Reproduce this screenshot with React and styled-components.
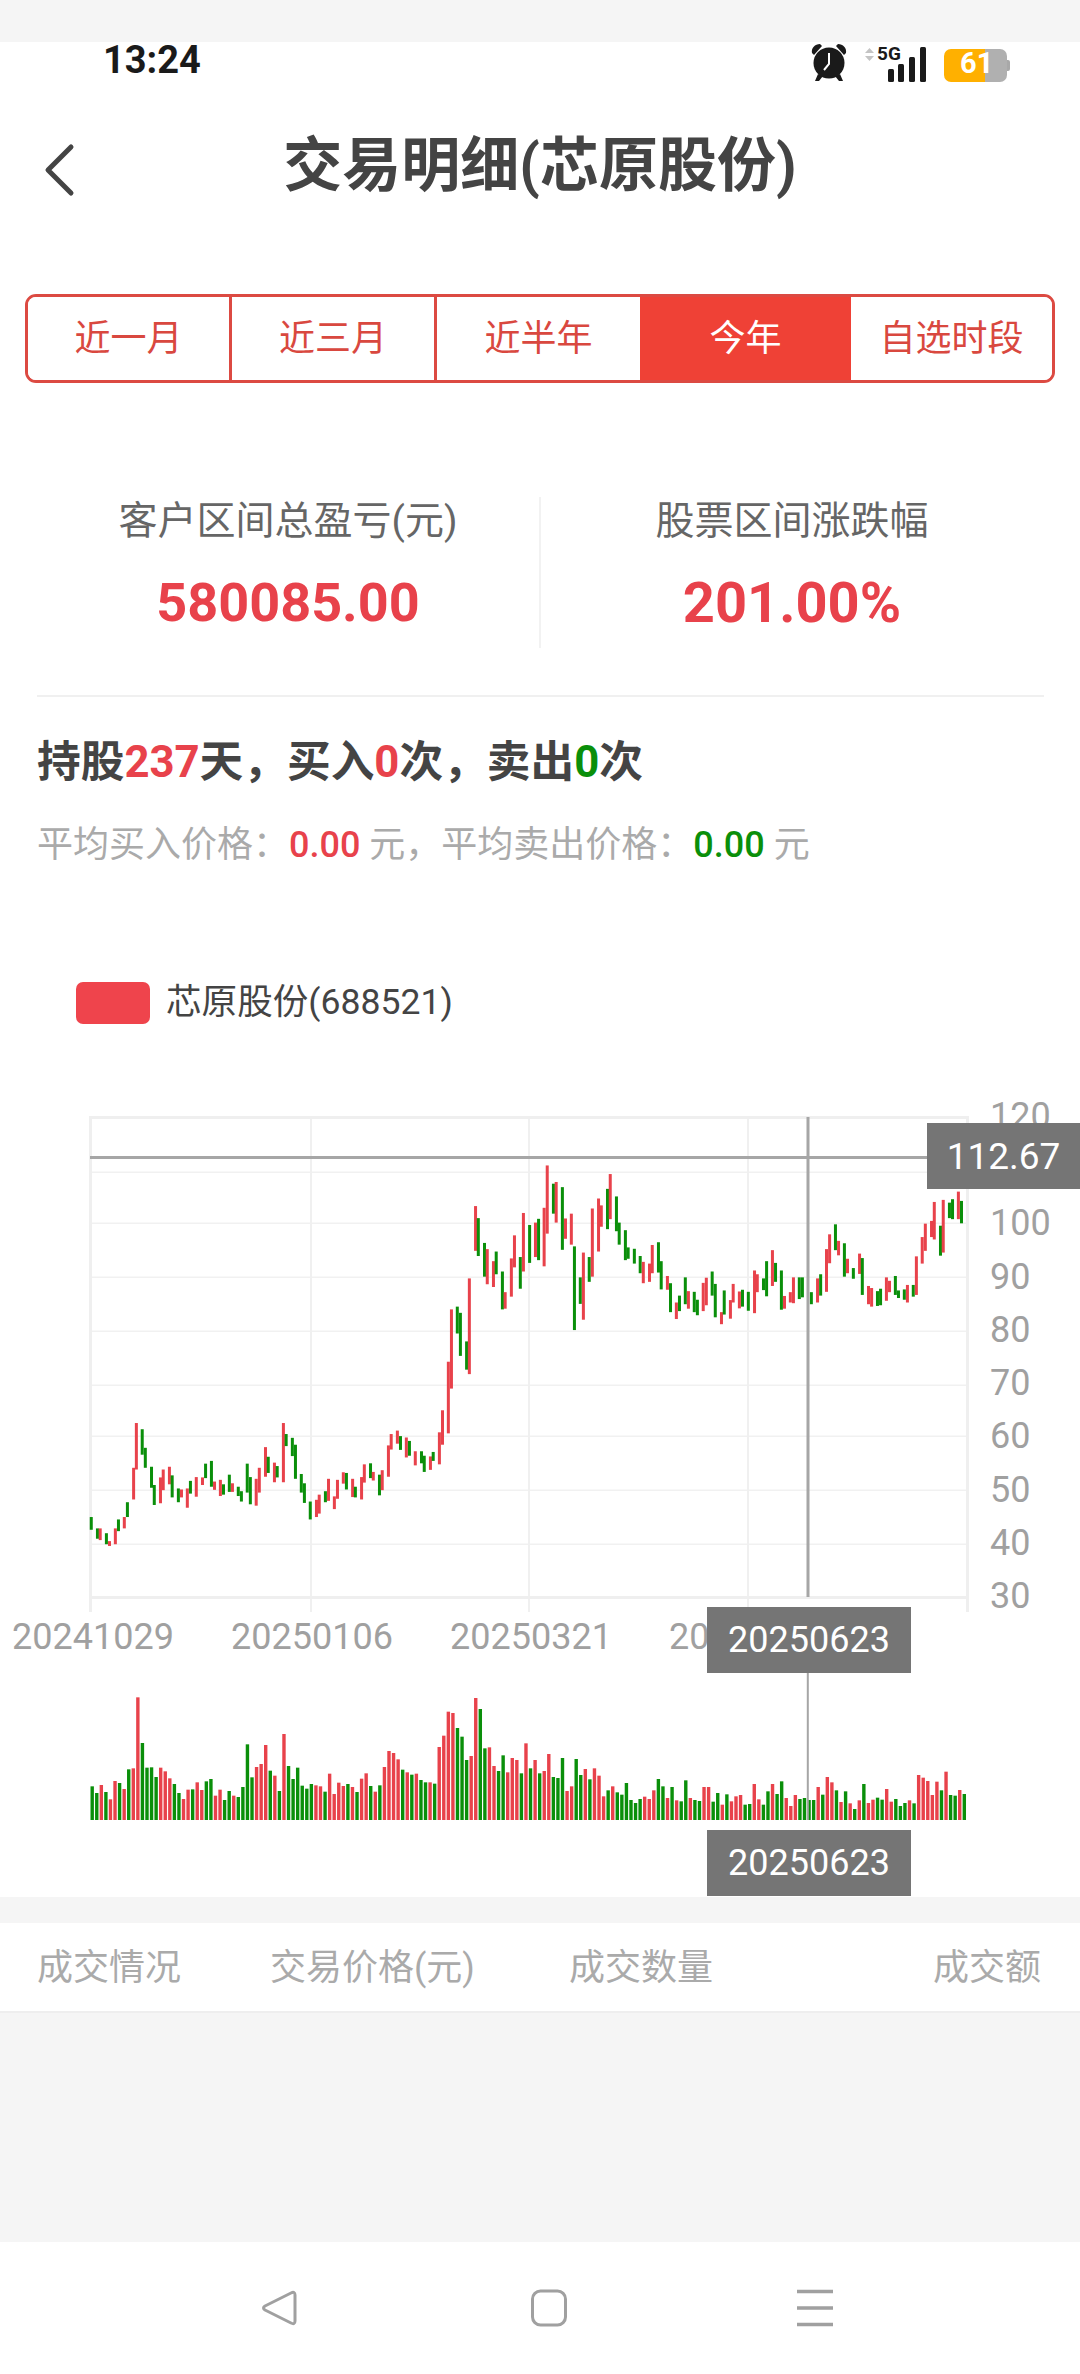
import React from 'react'
import styled, { createGlobalStyle } from 'styled-components'

const RED = '#e8424b'
const GREEN = '#0a8f0a'

// candles, read off the chart: [up?, x, top, bottom]
const candlesA = 'g265,1243,1280 g283,1276,1306 r291,1276,1310 g309,1290,1322 r318,1313,1327 r335,1276,1322 g344,1250,1284 r361,1243,1276 g370,1200,1243 r388,1100,1192 r396,970,1105 g413,988,1062 g422,1042,1100 g440,1097,1158 g448,1150,1208 r466,1128,1203 r474,1105,1165 r492,1097,1148 g500,1122,1186 g518,1160,1200 r527,1163,1186 r544,1160,1216 g553,1138,1175 r570,1127,1184 r588,1128,1150 g597,1088,1130 g614,1080,1155 r623,1140,1164 r640,1135,1182 g649,1148,1178 g666,1120,1170 r675,1145,1170 g692,1155,1182 g701,1168,1198 g718,1088,1172 g727,1127,1206 r744,1132,1210 r753,1100,1172 r771,1040,1126 g779,1068,1115 r797,1085,1142 g805,1095,1128 r823,970,1142 g831,1002,1037 g849,1013,1066 g858,1033,1132 g875,1118,1172 g884,1145,1202 g901,1198,1250 r919,1193,1243 r927,1178,1233 g945,1168,1200 r954,1132,1196 r971,1183,1220 r980,1135,1190 r997,1113,1146 g1006,1115,1163 r1024,1132,1185 g1032,1155,1186 r1050,1127,1192 r1058,1090,1143 g1076,1087,1130 r1084,1112,1137 g1102,1120,1180 r1110,1107,1165 r1128,1035,1126 r1136,1002,1047 r1154,992,1030 g1163,1008,1048 r1180,1012,1070 g1189,1022,1065 r1206,1052,1093 g1224,1052,1087 g1232,1065,1112 r1250,1067,1106 g1258,1054,1080 r1276,997,1090 r1285,933,1033 r1302,792,1000 r1311,640,870 g1328,632,710 g1337,650,775 g1355,733,815 r1363,550,828 r1381,340,470 g1389,375,485 g1407,447,545 r1415,465,567 r1433,500,575 g1441,472,538 g1459,530,640 r1467,590,638 r1485,492,603 r1494,425,518 g1511,488,580 r1520,360,530 g1538,395,505 r1555,388,488 g1564,377,497'
const candlesB = 'r12,345,515 r21,222,420 g39,275,362 r47,270,388 g65,285,467 r74,376,435 r91,362,452 g100,457,700 g117,547,624 r126,475,670 g143,488,560 r152,347,545 r170,318,472 r178,338,400 g196,290,407 r204,247,378 g222,312,413 g230,388,452 g248,410,497 g256,460,493 g274,464,507 g291,485,535 r300,502,564 r318,507,560 r326,453,535 g344,445,533 g352,500,582 r370,543,583 g379,564,648 r396,620,668 g405,600,645 g422,547,625 r431,587,638 g448,589,648 g457,612,657 r474,563,645 r483,548,628 g500,530,600 g509,566,663 r527,648,683 g535,585,655 r553,613,667 r561,566,620 r579,588,637 g588,583,632 g605,589,644 r623,527,651 r631,538,590 g649,550,584 g658,500,602 r675,468,572 g684,505,560 g701,527,641 r710,601,638 r727,590,620 r736,547,622 g753,547,610 g762,547,605 g788,590,625 r806,550,620 g815,538,600 r832,465,589 r841,422,506 g858,393,468 r867,441,483 g884,448,545 r893,493,535 g910,520,551 r928,478,537 g936,491,598 r954,572,625 r963,578,632 g980,587,630 g989,580,628 r1006,547,615 r1015,557,590 g1032,543,598 g1041,585,607 g1058,582,612 r1067,569,620 g1084,569,603 r1093,486,598 r1110,430,507 r1119,391,470 r1137,383,430 r1145,328,437 g1163,397,484 r1171,322,475 g1189,330,375 g1198,320,378 r1215,298,378 g1224,325,390'

const volumes = 'g472 g492 r468 g489 r511 r456 g462 r480 g421 r418 r205 g342 g416 g415 g444 r416 r427 r448 g465 g492 r510 r482 g481 r460 r483 g457 g450 r500 r482 g513 g486 r500 g504 g474 g346 g445 r414 r405 r348 g425 r440 g486 r315 g411 g450 g416 g470 g479 g465 r469 r472 g488 r434 r495 r461 r471 g465 r474 g489 r449 r433 g471 r488 g469 r414 r366 r372 r391 g422 r430 g437 r434 g453 g460 r460 g464 r354 r320 r248 r252 g297 g323 g393 r381 r207 g240 g358 r355 r411 g426 g379 r430 r387 r393 g433 r343 g418 r393 g433 r426 r375 g444 g447 g387 r486 r472 g390 g438 r420 g451 r418 r440 r502 g484 r472 g490 g497 g462 g513 g522 g510 r503 r510 r484 g450 g472 r507 g474 r514 g517 g454 r507 g513 g516 r474 r474 g518 g492 r527 g496 r517 r502 r498 g527 g525 r465 r511 g527 g487 r465 g495 g457 r507 r531 r498 g510 g507 g513 g513 r474 g497 r444 r460 g484 r519 g487 r523 g540 r514 g465 r522 r512 g506 g512 r480 r518 g510 g531 g522 r514 g523 r438 r446 r456 r498 r458 g484 r428 g498 g500 r483 g495'

const parseCandles = (s, offset) => s.split(' ').map(item => {
  const [x, top, bottom] = item.slice(1).split(',').map(Number)
  return {
    color: item[0] === 'r' ? RED : GREEN,
    x: offset + x / 2.904,
    top: 1090 + top / 2.904,
    bottom: 1090 + bottom / 2.904,
  }
})

const candles = [...parseCandles(candlesA, 0), ...parseCandles(candlesB, 540)]

const gridRows = [1173, 1224, 1278, 1332, 1386, 1437, 1491, 1545]
const gridCols = [311, 529, 748]
const priceLabels = [[120, 1129], [100, 1236], [90, 1290], [80, 1343], [70, 1396], [60, 1449], [50, 1503], [40, 1556], [30, 1609]]
const dateLabels = [['20241029', 12], ['20250106', 231], ['20250321', 450], ['20', 669]]
const tabs = ['近一月', '近三月', '近半年', '今年', '自选时段']

const Global = createGlobalStyle`
  html, body { margin: 0; padding: 0; background: #f5f5f5; }
  body { font-family: Roboto, "Noto Sans CJK SC", sans-serif; }
`

const Page = styled.div`
  width: 1080px;
  height: 2374px;
  display: flex;
  flex-direction: column;
  background: #f5f5f5;
  overflow: hidden;
`

const TopGap = styled.div`
  height: 42px;
  flex: none;
`

const Main = styled.div`
  background: #fff;
  flex: none;
`

const StatusBar = styled.div`
  height: 46px;
  display: flex;
  align-items: center;
  justify-content: space-between;
  padding: 0 70px 0 103px;
`

const Time = styled.div`
  font-size: 38px;
  font-weight: 700;
  line-height: 34px;
  margin-top: -10px;
  color: #1a1a1a;
`

const StatusIcons = styled.div`
  display: flex;
  align-items: flex-start;
`

const Battery = styled.div`
  position: relative;
  width: 63px;
  height: 33px;
  margin: 2px 3px 0 17px;
  border-radius: 7px;
  background: linear-gradient(90deg, #ffb000 0 41px, #b0b0b0 41px);
  color: #fff;
  font-size: 29px;
  font-weight: 700;
  line-height: 29px;
  padding-left: 16px;
  box-sizing: border-box;
  &::after {
    content: '';
    position: absolute;
    right: -3px;
    top: 11px;
    width: 3px;
    height: 11px;
    background: #a8a8a8;
    border-radius: 0 2px 2px 0;
  }
`

const Header = styled.div`
  height: 154px;
  box-sizing: border-box;
  padding-bottom: 10px;
  display: flex;
  align-items: center;
  justify-content: center;
  position: relative;
`

const BackIcon = styled.svg`
  position: absolute;
  left: 42px;
  top: 54px;
`

const Title = styled.h1`
  margin: 0;
  font-size: 59px;
  font-weight: 700;
  color: #444;
`

const Tabs = styled.div`
  margin: 52px 25px 0;
  height: 89px;
  box-sizing: border-box;
  border: 3px solid #dc4a42;
  border-radius: 11px;
  display: grid;
  grid-template-columns: 204px 205px 203px 211px 1fr;
  overflow: hidden;
`

const Tab = styled.div`
  display: flex;
  align-items: center;
  justify-content: center;
  padding-bottom: 8px;
  font-size: 36px;
  color: ${p => (p.$active ? '#fff' : '#d9483f')};
  background: ${p => (p.$active ? '#ef4136' : '#fff')};
  border-right: ${p => (p.$divider ? '3px solid #dc4a42' : 'none')};
`

const Stats = styled.div`
  margin: 114px 37px 0;
  height: 151px;
  display: grid;
  grid-template-columns: 502px 1fr;
`

const Stat = styled.div`
  display: flex;
  flex-direction: column;
  align-items: center;
  border-left: ${p => (p.$divider ? '2px solid #f2f2f2' : 'none')};
`

const StatLabel = styled.div`
  margin-top: 2px;
  font-size: 39px;
  line-height: 44px;
  color: #666;
`

const StatValue = styled.div`
  margin-top: 28px;
  font-size: ${p => p.$size}px;
  line-height: 64px;
  font-weight: 700;
  color: ${RED};
`

const Rule = styled.div`
  margin: 47px 36px 0 37px;
  height: 2px;
  background: #f0f0f0;
`

const Summary = styled.div`
  margin: 35px 0 0 37px;
  font-size: 43.7px;
  line-height: 60px;
  font-weight: 700;
  color: #444;
`

const AvgLine = styled.div`
  margin: 28px 0 0 37px;
  font-size: 36px;
  line-height: 50px;
  color: #aaa;
`

const Num = styled.span`
  color: ${p => (p.$green ? GREEN : RED)};
  font-weight: ${p => (p.$medium ? 500 : 'inherit')};
`

const Legend = styled.div`
  margin: 112px 0 0 76px;
  height: 42px;
  display: flex;
  align-items: center;
  gap: 16px;
  font-size: 35.6px;
  color: #444;
`

const LegendText = styled.span`
  margin-top: -9px;
`

const Swatch = styled.div`
  width: 74px;
  height: 42px;
  border-radius: 7px;
  background: #ef444c;
`

const ChartWrap = styled.div`
  position: relative;
  margin-top: 65px;
  height: 808px;
`

const ChartSvg = styled.svg`
  display: block;
`

const AxisText = styled.text`
  font-family: Roboto, sans-serif;
  font-size: 36px;
  fill: #a0a0a0;
`

const Tag = styled.div`
  position: absolute;
  display: flex;
  align-items: center;
  justify-content: center;
  background: #757575;
  color: #fff;
  font-size: ${p => p.$size}px;
  left: ${p => p.$left}px;
  top: ${p => p.$top}px;
  width: ${p => p.$width}px;
  height: ${p => p.$height}px;
`

const Spacer = styled.div`
  height: 26px;
  flex: none;
`

const TableHead = styled.div`
  height: 90px;
  flex: none;
  box-sizing: border-box;
  background: #fff;
  border-bottom: 2px solid #eee;
  display: grid;
  grid-template-columns: 233px 299px 1fr auto;
  align-items: center;
  padding: 0 39px 6px 37px;
  font-size: 36px;
  color: #aaa;
`

const TableBody = styled.div`
  flex: 1;
`

const NavBar = styled.div`
  height: 132px;
  flex: none;
  background: #fff;
  position: relative;
`

const NavIcon = styled.svg`
  position: absolute;
  left: ${p => p.$left}px;
  top: 46px;
`

const Alarm = () => (
  <svg width="38" height="40" viewBox="0 0 38 40" style={{ marginTop: -4 }}>
    <path d="M2 10 C1 5 5 1 10 1 L12 3 L4 12 Z M36 10 C37 5 33 1 28 1 L26 3 L34 12 Z" fill="#1a1a1a" />
    <path d="M8 31 L5 38 L9 38 L13 33 Z M30 31 L33 38 L29 38 L25 33 Z" fill="#1a1a1a" />
    <circle cx="19" cy="20" r="15.5" fill="#1a1a1a" />
    <path d="M19 10 V21 L14 27" stroke="#fff" strokeWidth="2" fill="none" />
  </svg>
)

const Signal = () => (
  <svg width="62" height="44" viewBox="0 -6 62 44" style={{ marginLeft: 17, marginTop: -8 }}>
    <path d="M4.5 3 L9 8 H0 Z" fill="#c4c4c4" />
    <path d="M4.5 16 L9 11 H0 Z" fill="#c4c4c4" />
    <text x="12" y="15" fontFamily="Roboto, sans-serif" fontWeight="700" fontSize="19" fill="#1a1a1a">5G</text>
    <rect x="23" y="24" width="6" height="13" rx="1.5" fill="#1a1a1a" />
    <rect x="33" y="19" width="6" height="18" rx="1.5" fill="#1a1a1a" />
    <rect x="44" y="12" width="6" height="25" rx="1.5" fill="#1a1a1a" />
    <rect x="55" y="2" width="6" height="35" rx="1.5" fill="#1a1a1a" />
  </svg>
)

const Chart = () => (
  <ChartSvg width="1080" height="808" viewBox="0 1090 1080 808">
    {gridRows.map(y => <rect key={y} x="90" y={y - 0.5} width="877" height="1.5" fill="#f1f1f1" />)}
    {gridCols.map(x => <rect key={x} x={x - 1} y="1118" width="2" height="495" fill="#f0f0f0" />)}
    <rect x="89" y="1117" width="3" height="496" fill="#efefef" />
    <rect x="966" y="1117" width="3" height="496" fill="#efefef" />
    <rect x="89" y="1117" width="880" height="3" fill="#efefef" />
    <rect x="89" y="1597" width="880" height="3" fill="#efefef" />

    {candles.map((c, i) => (
      <rect key={i} x={c.x - 1.5} y={c.top} width="3" height={c.bottom - c.top} fill={c.color} />
    ))}

    <rect x="90" y="1157" width="840" height="3" fill="#a6a6a6" />
    <rect x="806.5" y="1118" width="3" height="480" fill="#a6a6a6" />

    {priceLabels.map(([v, y]) => <AxisText key={v} x="990" y={y}>{v}</AxisText>)}
    {dateLabels.map(([d, x]) => <AxisText key={d} x={x} y="1650">{d}</AxisText>)}

    {volumes.split(' ').map((v, i) => {
      const top = 1630 + Number(v.slice(1)) / 3
      return (
        <rect key={i} x={90.5 + i * 4.566} y={top} width="3.4" height={1821 - top} fill={v[0] === 'r' ? RED : GREEN} />
      )
    })}
    <rect x="806.8" y="1672" width="2" height="149" fill="#a6a6a6" />
  </ChartSvg>
)

export default function App() {
  return (
    <Page>
      <Global />
      <TopGap />
      <Main>
        <StatusBar>
          <Time>13:24</Time>
          <StatusIcons>
            <Alarm />
            <Signal />
            <Battery>61</Battery>
          </StatusIcons>
        </StatusBar>
        <Header>
          <BackIcon width="34" height="56" viewBox="0 0 34 56">
            <path d="M29 5 L6 28 L29 51" fill="none" stroke="#444" strokeWidth="5" strokeLinecap="round" strokeLinejoin="round" />
          </BackIcon>
          <Title>交易明细(芯原股份)</Title>
        </Header>
        <Tabs>
          {tabs.map((t, i) => (
            <Tab key={t} $active={i === 3} $divider={i < 2}>{t}</Tab>
          ))}
        </Tabs>
        <Stats>
          <Stat>
            <StatLabel>客户区间总盈亏(元)</StatLabel>
            <StatValue $size={54}>580085.00</StatValue>
          </Stat>
          <Stat $divider>
            <StatLabel>股票区间涨跌幅</StatLabel>
            <StatValue $size={56}>201.00%</StatValue>
          </Stat>
        </Stats>
        <Rule />
        <Summary>
          持股<Num>237</Num>天，买入<Num>0</Num>次，卖出<Num $green>0</Num>次
        </Summary>
        <AvgLine>
          平均买入价格：<Num $medium>0.00</Num> 元，平均卖出价格：<Num $green $medium>0.00</Num> 元
        </AvgLine>
        <Legend>
          <Swatch />
          <LegendText>芯原股份(688521)</LegendText>
        </Legend>
        <ChartWrap>
          <Chart />
          <Tag $left={927} $top={34} $width={153} $height={66} $size={37}>112.67</Tag>
          <Tag $left={707} $top={518} $width={204} $height={66} $size={36}>20250623</Tag>
          <Tag $left={707} $top={741} $width={204} $height={66} $size={36}>20250623</Tag>
        </ChartWrap>
      </Main>
      <Spacer />
      <TableHead>
        <span>成交情况</span>
        <span>交易价格(元)</span>
        <span>成交数量</span>
        <span>成交额</span>
      </TableHead>
      <TableBody />
      <NavBar>
        <NavIcon $left={260} width="40" height="40" viewBox="0 0 40 40">
          <path d="M33 5 Q37 3 37 7 V33 Q37 37 33 35 L7 22 Q4 20 7 18 Z" transform="translate(-2 0)" fill="none" stroke="#a0a0a0" strokeWidth="3" strokeLinejoin="round" />
        </NavIcon>
        <NavIcon $left={529} width="40" height="40" viewBox="0 0 40 40">
          <rect x="3.5" y="3" width="33" height="34" rx="8" fill="none" stroke="#a0a0a0" strokeWidth="3" />
        </NavIcon>
        <NavIcon $left={797} width="36" height="40" viewBox="0 0 36 40">
          <path d="M0 3.5 H36 M0 20 H36 M0 36.5 H36" stroke="#a0a0a0" strokeWidth="3.4" />
        </NavIcon>
      </NavBar>
    </Page>
  )
}
